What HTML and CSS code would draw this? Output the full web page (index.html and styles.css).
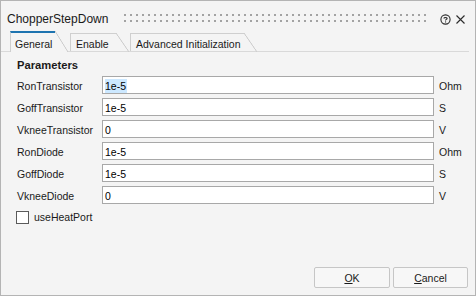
FILE: index.html
```html
<!DOCTYPE html>
<html>
<head>
<meta charset="utf-8">
<link rel="stylesheet" href="styles.css">
</head>
<body>
<div class="window">
  <div class="titlebar">
    <span class="title">ChopperStepDown</span>
    <div class="grip"></div>
    <svg class="help" width="11" height="11" viewBox="0 0 11 11">
      <circle cx="5.5" cy="5.5" r="4.6" fill="none" stroke="#2b2b2b" stroke-width="1.1"/>
      <path d="M3.9 4.4 C3.9 3.2 7.1 3.2 7.1 4.4 C7.1 5.4 5.5 5.4 5.5 6.5" fill="none" stroke="#2b2b2b" stroke-width="1.1"/>
      <rect x="5" y="7.4" width="1.1" height="1.1" fill="#2b2b2b"/>
    </svg>
    <svg class="close" width="9" height="9" viewBox="0 0 9 9">
      <path d="M0.5 0.5 L8.5 8.5 M8.5 0.5 L0.5 8.5" stroke="#2b2b2b" stroke-width="1.1"/>
    </svg>
  </div>
  <div class="tabs">
    <div class="tab active">General</div>
    <div class="tab">Enable</div>
    <div class="tab">Advanced Initialization</div>
  </div>
  <div class="pane">
    <div class="group-title">Parameters</div>
    <div class="grid">
      <div class="label">RonTransistor</div><div class="field"><span class="sel">1e-5</span></div><div class="unit">Ohm</div>
      <div class="label">GoffTransistor</div><div class="field">1e-5</div><div class="unit">S</div>
      <div class="label">VkneeTransistor</div><div class="field">0</div><div class="unit">V</div>
      <div class="label">RonDiode</div><div class="field">1e-5</div><div class="unit">Ohm</div>
      <div class="label">GoffDiode</div><div class="field">1e-5</div><div class="unit">S</div>
      <div class="label">VkneeDiode</div><div class="field">0</div><div class="unit">V</div>
    </div>
    <div class="check"><span class="box"></span><span>useHeatPort</span></div>
  </div>
  <div class="buttons">
    <div class="btn ok"><u>O</u>K</div>
    <div class="btn cancel"><u>C</u>ancel</div>
  </div>
</div>
</body>
</html>
```
FILE: styles.css
```css
html, body {
  margin: 0;
  padding: 0;
  background: #f4f4f4;
}
.window {
  width: 476px;
  height: 296px;
  box-sizing: border-box;
  border: 1px solid #b4b4b4;
  background: #f4f4f4;
  display: flex;
  flex-direction: column;
  font-family: "Liberation Sans", Arial, sans-serif;
  font-size: 10.5px;
  color: #1a1a1a;
}
.titlebar {
  height: 30px;
  display: flex;
  align-items: flex-start;
  flex: none;
}
.title {
  margin: 11px 0 0 6px;
  font-size: 12px;
  line-height: 14px;
  color: #1a1a1a;
}
.grip {
  flex: 1;
  height: 8px;
  margin: 13px 14px 0 16px;
  background-image: linear-gradient(90deg, #a3a3a3 2px, transparent 0), linear-gradient(90deg, #a3a3a3 2px, transparent 0);
  background-size: 6px 2px;
  background-repeat: repeat-x;
  background-position: 0 0, 0 6px;
}
.help {
  margin-top: 13px;
  flex: none;
}
.close {
  margin: 14px 10px 0 5px;
  flex: none;
}
.tabs {
  display: flex;
  align-items: flex-end;
  height: 20px;
  padding-left: 9px;
  margin-right: 6px;
  border-bottom: 1px solid #d9d9d9;
  flex: none;
}
.tab {
  position: relative;
  height: 18px;
  box-sizing: border-box;
  border-left: 1px solid #cfcfcf;
  border-top: 1px solid #cfcfcf;
  padding: 4px 0 0 4px;
  line-height: 12px;
  margin-right: 15px;
  margin-bottom: 0;
}
.tab::after {
  content: "";
  position: absolute;
  top: -1px;
  right: -13px;
  width: 13px;
  height: 19px;
  background: linear-gradient(to top right, transparent calc(50% - 0.7px), #cfcfcf calc(50% - 0.2px), #cfcfcf calc(50% + 0.2px), transparent calc(50% + 0.7px));
}
.tab.active {
  height: 21px;
  margin-bottom: -1px;
  border-top: 2px solid #1e74b0;
  padding-top: 5px;
  width: 45px;
  background: #f4f4f4;
}
.tab.active::after {
  top: -2px;
  height: 21px;
  background: linear-gradient(to top right, #f4f4f4 calc(50% - 0.7px), #cfcfcf calc(50% - 0.2px), #cfcfcf calc(50% + 0.2px), transparent calc(50% + 0.7px));
}
.tab:nth-child(2) {
  width: 46px;
  padding-left: 5px;
  margin-right: 14px;
}
.tab:nth-child(3) {
  width: 114px;
  padding-left: 5px;
}
.pane {
  flex: 1;
  padding: 6px 0 0 16px;
}
.group-title {
  font-weight: bold;
  font-size: 11.2px;
  line-height: 14px;
  color: #1a1a1a;
}
.grid {
  margin-top: 4px;
  display: grid;
  grid-template-columns: 85px 332px auto;
  grid-auto-rows: 18px;
  row-gap: 4px;
}
.label, .unit {
  padding-top: 3px;
  line-height: 14px;
  white-space: nowrap;
}
.unit {
  padding-left: 5px;
}
.field {
  box-sizing: border-box;
  height: 18px;
  border: 1px solid #a8a8a8;
  background: #ffffff;
  padding: 2px 0 0 2px;
  line-height: 14px;
  color: #000;
}
.sel {
  background: #cce8ff;
  display: inline-block;
  padding-right: 1px;
}
.check {
  margin: 6px 0 0 -1px;
  display: flex;
  align-items: center;
  gap: 5px;
  line-height: 14px;
}
.box {
  width: 13px;
  height: 13px;
  box-sizing: border-box;
  border: 1px solid #5a5a5a;
  background: #ffffff;
}
.buttons {
  flex: none;
  display: flex;
  justify-content: flex-end;
  gap: 3px;
  padding: 0 7px 7px 0;
}
.btn {
  height: 21px;
  box-sizing: border-box;
  border: 1px solid #c6c6c6;
  background: #f7f7f7;
  border-radius: 2px;
  text-align: center;
  line-height: 18px;
  padding-top: 1px;
}
.ok { width: 76px; }
.cancel { width: 75px; }
```
